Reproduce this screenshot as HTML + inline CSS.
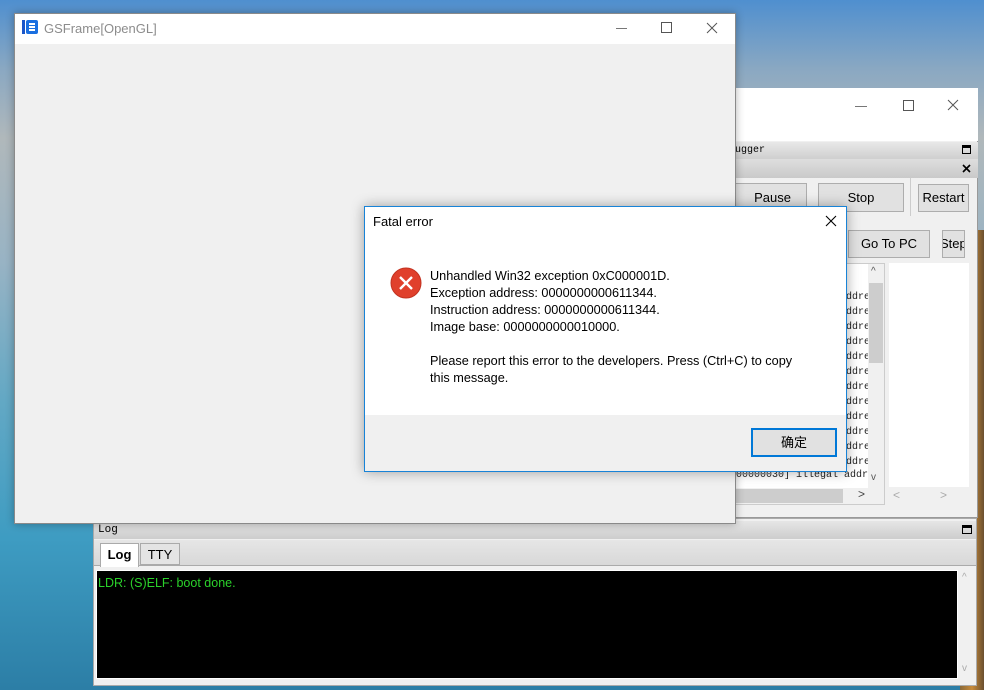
<!DOCTYPE html>
<html><head><meta charset="utf-8"><style>
*{margin:0;padding:0;box-sizing:border-box}
body{width:984px;height:690px;overflow:hidden;position:relative;font-family:"Liberation Sans","Noto Sans CJK SC",sans-serif;font-size:12px;
background:linear-gradient(180deg,#4f8fcf 0%,#8aa8c2 10%,#b0b8bb 20%,#98b3c4 38%,#63a8c4 58%,#3e9cc2 78%,#2c7ea6 100%);}
.abs{position:absolute}
.mono{font-family:"Liberation Mono",monospace;font-size:10px}
.btn{position:absolute;background:#e1e1e1;border:1px solid #adadad;text-align:center;font-size:13px;color:#000}
</style></head><body>
<div class="abs" style="left:960px;top:230px;width:24px;height:460px;background:linear-gradient(90deg,#8a6a3a,#c78a3a,#6a5030)"></div>

<!-- debugger window -->
<div class="abs" style="left:730px;top:88px;width:248px;height:430px;background:#f0f0f0;border:1px solid #999"></div>
<div class="abs" style="left:730px;top:88px;width:248px;height:53px;background:#fff"></div>
<div class="abs" style="left:855px;top:106px;width:12px;height:1px;background:#777"></div>
<div class="abs" style="left:903px;top:100px;width:11px;height:11px;border:1px solid #555"></div>
<svg class="abs" style="left:947px;top:99px" width="12" height="12"><path d="M1 1L11 11M11 1L1 11" stroke="#555" stroke-width="1"/></svg>
<div class="abs mono" style="left:730px;top:142px;width:248px;height:17px;background:linear-gradient(#e8e8e8,#cfcfcf);padding:3px 0 0 5px">ugger</div>
<div class="abs" style="left:962px;top:145px;width:9px;height:9px;border:1px solid #000;border-top-width:3px"></div>
<div class="abs" style="left:730px;top:159px;width:248px;height:19px;background:linear-gradient(#dedede,#c9c9c9)"></div>
<svg class="abs" style="left:962px;top:164px" width="9" height="9"><path d="M1 1L8 8M8 1L1 8" stroke="#000" stroke-width="1.6"/></svg>
<div class="btn" style="left:730px;top:183px;width:77px;height:29px;line-height:27px;padding-left:8px">Pause</div>
<div class="btn" style="left:818px;top:183px;width:86px;height:29px;line-height:27px">Stop</div>
<div class="abs" style="left:910px;top:178px;width:1px;height:38px;background:#ccc"></div>
<div class="btn" style="left:918px;top:184px;width:51px;height:28px;line-height:26px">Restart</div>
<div class="btn" style="left:848px;top:230px;width:82px;height:28px;line-height:26px">Go To PC</div>
<div class="btn" style="left:942px;top:230px;width:23px;height:28px;line-height:26px;overflow:hidden;text-indent:-3px">Step</div>
<div class="abs" style="left:730px;top:263px;width:155px;height:242px;background:#fff;border:1px solid #ccc"></div>
<div class="abs mono" style="left:846px;top:290px;line-height:15px;color:#222">ddre<br>ddre<br>ddre<br>ddre<br>ddre<br>ddre<br>ddre<br>ddre<br>ddre<br>ddre<br>ddre<br>ddre</div>
<div class="abs mono" style="left:736px;top:470px;color:#222">00000030] illegal addre</div>
<div class="abs" style="left:868px;top:264px;width:16px;height:224px;background:#f0f0f0"></div>
<div class="abs" style="left:869px;top:283px;width:14px;height:80px;background:#cdcdcd"></div>
<div class="abs" style="left:871px;top:266px;font-size:10px;color:#555">^</div>
<div class="abs" style="left:871px;top:472px;font-size:10px;color:#555">v</div>
<div class="abs" style="left:731px;top:488px;width:153px;height:16px;background:#f0f0f0"></div>
<div class="abs" style="left:735px;top:489px;width:108px;height:14px;background:#cdcdcd"></div>
<div class="abs" style="left:858px;top:487px;font-size:12px;color:#444">&gt;</div>
<div class="abs" style="left:889px;top:263px;width:80px;height:224px;background:#fff"></div>
<div class="abs" style="left:893px;top:488px;font-size:12px;color:#aaa">&lt;</div>
<div class="abs" style="left:940px;top:488px;font-size:12px;color:#aaa">&gt;</div>

<!-- log window -->
<div class="abs" style="left:93px;top:518px;width:884px;height:168px;background:#f0f0f0;border:1px solid #aaa"></div>
<div class="abs mono" style="left:94px;top:521px;width:882px;height:18px;background:linear-gradient(#e6e6e6,#cdcdcd);padding:3px 0 0 4px;font-size:11px">Log</div>
<div class="abs" style="left:962px;top:525px;width:10px;height:9px;border:1px solid #000;border-top-width:3px"></div>
<div class="abs" style="left:94px;top:540px;width:882px;height:26px;background:linear-gradient(#e6e6e6,#d8d8d8);border-bottom:1px solid #aaa"></div>
<div class="abs" style="left:100px;top:543px;width:39px;height:24px;background:#fff;border:1px solid #aaa;border-bottom:none;font-weight:bold;font-size:13px;text-align:center;line-height:22px">Log</div>
<div class="abs" style="left:140px;top:543px;width:40px;height:22px;background:#e4e4e4;border:1px solid #aaa;font-size:13px;text-align:center;line-height:21px">TTY</div>
<div class="abs" style="left:96px;top:570px;width:862px;height:109px;background:#000;border:1px solid #fff"></div>
<div class="abs" style="left:98px;top:576px;color:#2bd12b;font-size:12.5px">LDR: (S)ELF: boot done.</div>
<div class="abs" style="left:958px;top:570px;width:16px;height:109px;background:#f0f0f0"></div>
<div class="abs" style="left:962px;top:572px;font-size:10px;color:#aaa">^</div>
<div class="abs" style="left:962px;top:663px;font-size:10px;color:#aaa">v</div>

<!-- GSFrame -->
<div class="abs" style="left:14px;top:13px;width:722px;height:511px;background:#f0f0f0;border:1px solid #8a8a8a;box-shadow:0 0 8px rgba(0,0,0,.3)"></div>
<div class="abs" style="left:15px;top:14px;width:720px;height:30px;background:#fff"></div>
<svg class="abs" style="left:22px;top:20px" width="16" height="14"><rect x="0" y="0" width="3" height="14" fill="#1a56c9"/><rect x="4" y="0" width="12" height="14" rx="2" fill="#1a6fe0"/><rect x="7" y="3" width="6" height="2" fill="#fff"/><rect x="7" y="6" width="6" height="2" fill="#fff"/><rect x="7" y="9" width="6" height="2" fill="#fff"/></svg>
<div class="abs" style="left:44px;top:21px;color:#8c8c8c;font-size:13px">GSFrame[OpenGL]</div>
<div class="abs" style="left:616px;top:28px;width:11px;height:1px;background:#777"></div>
<div class="abs" style="left:661px;top:22px;width:11px;height:11px;border:1px solid #555"></div>
<svg class="abs" style="left:706px;top:22px" width="12" height="12"><path d="M1 1L11 11M11 1L1 11" stroke="#555" stroke-width="1"/></svg>

<!-- dialog -->
<div class="abs" style="left:364px;top:206px;width:483px;height:266px;background:#fff;border:1px solid #1883d7;box-shadow:0 0 12px rgba(0,0,0,.35)"></div>
<div class="abs" style="left:373px;top:214px;font-size:13px;color:#000">Fatal error</div>
<svg class="abs" style="left:825px;top:215px" width="12" height="12"><path d="M1 1L11 11M11 1L1 11" stroke="#000" stroke-width="1.1"/></svg>
<svg class="abs" style="left:390px;top:267px" width="32" height="32"><circle cx="16" cy="16" r="15" fill="#e0402c" stroke="#c23220"/><path d="M10 10L22 22M22 10L10 22" stroke="#fff" stroke-width="2.4"/></svg>
<div class="abs" style="left:430px;top:268px;font-size:12.7px;line-height:17px;color:#000">Unhandled Win32 exception 0xC000001D.<br>Exception address: 0000000000611344.<br>Instruction address: 0000000000611344.<br>Image base: 0000000000010000.<br><br>Please report this error to the developers. Press (Ctrl+C) to copy<br>this message.</div>
<div class="abs" style="left:365px;top:415px;width:481px;height:56px;background:#f0f0f0"></div>
<div class="abs" style="left:751px;top:428px;width:86px;height:29px;background:#e1e1e1;border:2px solid #0078d7;text-align:center;line-height:25px;font-size:13px">确定</div>
</body></html>
